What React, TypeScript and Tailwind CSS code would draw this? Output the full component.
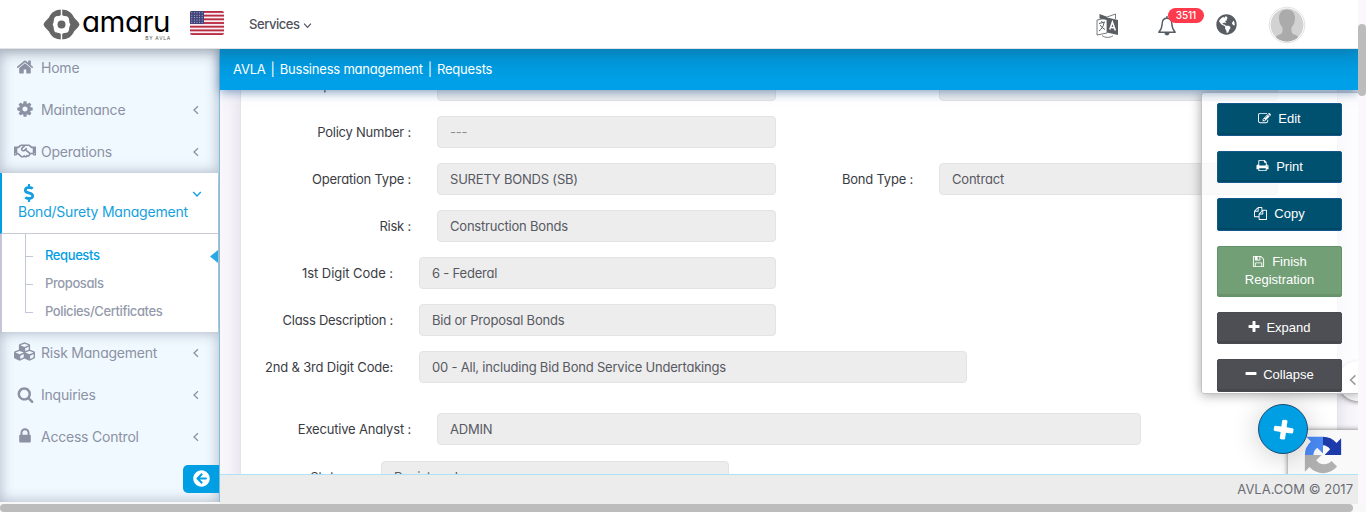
import React from 'react';
import { FaCubes, FaRegHandshake, FaDollarSign, FaArrowCircleLeft, FaGlobeAmericas } from 'react-icons/fa';

const ICONS = {
  home: 'M1472 992v480q0 26-19 45t-45 19h-384v-384h-256v384h-384q-26 0-45-19t-19-45v-480q0-1 .5-3t.5-3l575-474 575 474q1 2 1 6zm223-69l-62 74q-8 9-21 11h-3q-13 0-21-7l-692-577-692 577q-12 8-24 7-13-2-21-11l-62-74q-8-10-7-23.5t11-21.5l719-599q32-26 76-26t76 26l244 204v-195q0-14 9-23t23-9h192q14 0 23 9t9 23v408l219 182q10 8 11 21.5t-7 23.5z',
  cog: 'M1152 896q0-106-75-181t-181-75-181 75-75 181 75 181 181 75 181-75 75-181zm512-109v222q0 12-8 23t-20 13l-185 28q-19 54-39 91 35 50 107 138 10 12 10 25t-9 23q-27 37-99 108t-94 71q-12 0-26-9l-138-108q-44 23-91 38-16 136-29 186-7 28-36 28h-222q-14 0-24.5-8.500t-11.500-21.500l-28-184q-49-16-90-37l-141 107q-10 9-25 9-14 0-25-11-126-114-165-168-7-10-7-23 0-12 8-23 15-21 51-66.500t54-70.500q-27-50-41-99l-183-27q-13-2-21-12.500t-8-23.500v-222q0-12 8-23t19-13l186-28q14-46 39-92-40-57-107-138-10-12-10-24 0-10 9-23 26-36 98.500-107.500t94.500-71.500q13 0 26 10l138 107q44-23 91-38 16-136 29-186 7-28 36-28h222q14 0 24.500 8.500t11.500 21.500l28 184q49 16 90 37l142-107q9-9 24-9 13 0 25 10 129 119 165 170 7 8 7 22 0 12-8 23-15 21-51 66.500t-54 70.500q26 50 41 98l183 28q13 2 21 12.500t8 23.500z',
  search: 'M1216 832q0-185-131.500-316.500t-316.500-131.500-316.500 131.500-131.500 316.500 131.500 316.500 316.500 131.500 316.500-131.500 131.500-316.500zm512 832q0 52-38 90t-90 38q-54 0-90-38l-343-342q-179 124-399 124-143 0-273.500-55.500t-225-150-150-225-55.500-273.500 55.500-273.500 150-225 225-150 273.500-55.500 273.500 55.500 225 150 150 225 55.500 273.500q0 220-124 399l343 343q37 37 37 90z',
  lock: 'M640 768h512v-192q0-106-75-181t-181-75-181 75-75 181v192zm832 96v576q0 40-28 68t-68 28h-960q-40 0-68-28t-28-68v-576q0-40 28-68t68-28h32v-192q0-184 132-316t316-132 316 132 132 316v192h32q40 0 68 28t28 68z',
  edit: 'M888 1184l116-116-152-152-116 116v56h96v96h56zm440-720q-16-16-33 1l-350 350q-17 17-1 33t33-1l350-350q17-17 1-33zm80 594v190q0 119-84.500 203.500t-203.500 84.500h-832q-119 0-203.500-84.500t-84.500-203.500v-832q0-119 84.500-203.500t203.500-84.500h832q63 0 117 25 15 7 18 23 3 17-9 29l-49 49q-14 14-32 8-23-6-45-6h-832q-66 0-113 47t-47 113v832q0 66 47 113t113 47h832q66 0 113-47t47-113v-126q0-13 9-22l64-64q15-15 35-7t20 29zm-96-738l288 288-672 672h-288v-288zm444 132l-92 92-288-288 92-92q28-28 68-28t68 28l152 152q28 28 28 68t-28 68z',
  print: 'M448 1536h896v-256h-896v256zm0-640h896v-384h-160q-40 0-68-28t-28-68v-160h-640v640zm1152 64q0-26-19-45t-45-19-45 19-19 45 19 45 45 19 45-19 19-45zm128 0v416q0 13-9.500 22.500t-22.500 9.500h-224v160q0 40-28 68t-68 28h-960q-40 0-68-28t-28-68v-160h-224q-13 0-22.500-9.500t-9.500-22.500v-416q0-79 56.500-135.500t135.500-56.500h64v-544q0-40 28-68t68-28h672q40 0 88 20t76 48l152 152q28 28 48 76t20 88v256h64q79 0 135.500 56.500t56.500 135.500z',
  copy: 'M1696 384q40 0 68 28t28 68v1216q0 40-28 68t-68 28h-960q-40 0-68-28t-28-68v-288h-544q-40 0-68-28t-28-68v-672q0-40 20-88t48-76l408-408q28-28 76-48t88-20h416q40 0 68 28t28 68v328q68-40 128-40h416zm-544 213l-299 299h299v-299zm-640-384l-299 299h299v-299zm196 647l316-316v-416h-384v416q0 40-28 68t-68 28h-416v640h512v-256q0-40 20-88t48-76zm956 804v-1152h-384v416q0 40-28 68t-68 28h-416v640h896z',
  save: 'M512 1536h768v-384h-768v384zm896 0h128v-896q0-14-10-38.500t-20-34.500l-281-281q-10-10-34-20t-39-10v416q0 40-28 68t-68 28h-576q-40 0-68-28t-28-68v-416h-128v1280h128v-416q0-40 28-68t68-28h832q40 0 68 28t28 68v416zm-384-928v-320q0-13-9.500-22.500t-22.500-9.500h-192q-13 0-22.500 9.500t-9.500 22.500v320q0 13 9.500 22.500t22.500 9.500h192q13 0 22.500-9.500t9.500-22.500zm640 32v928q0 40-28 68t-68 28h-1344q-40 0-68-28t-28-68v-1344q0-40 28-68t68-28h928q40 0 88 20t76 48l280 280q28 28 48 76t20 88z',
  plus: 'M1600 736v192q0 40-28 68t-68 28h-416v416q0 40-28 68t-68 28h-192q-40 0-68-28t-28-68v-416h-416q-40 0-68-28t-28-68v-192q0-40 28-68t68-28h416v-416q0-40 28-68t68-28h192q40 0 68 28t28 68v416h416q40 0 68 28t28 68z',
  minus: 'M1600 736v192q0 40-28 68t-68 28h-1216q-40 0-68-28t-28-68v-192q0-40 28-68t68-28h1216q40 0 68 28t28 68z',
};

function Icon({ name, className }: { name: keyof typeof ICONS; className: string }) {
  return (
    <svg viewBox="0 0 1792 1792" fill="currentColor" className={className}>
      <path d={ICONS[name]} />
    </svg>
  );
}

function Chevron({ className }: { className: string }) {
  return (
    <svg viewBox="0 0 10 10" fill="none" stroke="currentColor" strokeWidth="1.3" className={className}>
      <path d="M7 1.200L3 5l4 3.800" />
    </svg>
  );
}

function Logo() {
  return (
    <div className="flex items-center">
      <svg width="37" height="31" viewBox="0 0 37 31" className="shrink-0">
        <path d="M18.500 0.500C24.500 0.500 29 3.500 31 8.500C33 10.500 36 13.500 36.500 15.500C36 17.500 33 20.500 31 22.500C29 27.500 24.500 30.500 18.500 30.500S8 27.500 6 22.500C4 20.500 1 17.500 0.500 15.500C1 13.500 4 10.500 6 8.500C8 3.500 12.500 0.500 18.500 0.500Z" fill="#666666" />
        <path d="M18.500 5.700C21 7.700 23.500 6.300 25.200 8.200C26.800 10 25.500 12.500 27.300 15.500C25.500 18.500 26.800 21 25.200 22.800C23.500 24.700 21 23.300 18.500 25.300C16 23.300 13.500 24.700 11.800 22.800C10.200 21 11.500 18.500 9.700 15.500C11.500 12.500 10.200 10 11.800 8.200C13.500 6.300 16 7.700 18.500 5.700Z" fill="#fff" />
        <path d="M18.500 0V7M18.500 24V31" stroke="#fff" strokeWidth="1.400" />
        <circle cx="18.500" cy="15.500" r="4" fill="#666666" />
      </svg>
      <div className="ml-[2px] flex w-[89px] flex-col">
        <span className="h-[26px] text-[29.500px] leading-[26px] font-normal tracking-[-0.500px] text-black">amaru</span>
        <span className="mt-[1px] self-end text-[5px] leading-[6px] tracking-[0.700px] whitespace-nowrap text-[#555]">BY AVLA</span>
      </div>
    </div>
  );
}

function Flag() {
  return (
    <svg width="34" height="24" viewBox="0 0 34 24" className="rounded-[2px]">
      <rect width="34" height="24" fill="#f6eef0" />
      {[0, 2, 4, 6, 8, 10, 12].map((i) => (
        <rect key={i} y={i * 1.846} width="34" height="1.846" fill="#b92a43" />
      ))}
      <rect width="14" height="13" fill="#41437a" />
      {[1.8, 4.2, 6.6, 9, 11.3].map((y) =>
        [1.8, 4.4, 7, 9.6, 12.2].map((x) => <circle key={`${x}-${y}`} cx={x} cy={y} r="0.550" fill="#c3c4dc" />),
      )}
    </svg>
  );
}

function Header() {
  return (
    <header className="relative z-20 flex h-[49px] shrink-0 items-center border-b border-[#e3e3e8] bg-white shadow-[0_1px_15px_1px_rgba(50,60,70,0.300)]">
      <div className="ml-[43px] w-[147px]">
        <Logo />
      </div>
      <div className="-mt-[3px]">
        <Flag />
      </div>
      <div className="mt-px ml-[25px] flex items-center text-[13px] font-medium tracking-[-0.450px] text-[#4f525c]">
        Services
        <Chevron className="mt-px ml-[3px] size-[9px] -rotate-90" />
      </div>
      <div className="mt-px mr-[52px] ml-auto flex items-center text-[#575d63]">
        <svg width="23" height="25" viewBox="0 0 23 25" className="mt-[2px]">
          <path d="M3.500 1L11 3.800V7L3.500 5.500z" fill="currentColor" />
          <path d="M11 4L19.500 1v5" fill="none" stroke="currentColor" strokeWidth="0.800" />
          <path d="M1 7l10-2v15L1 22z" fill="none" stroke="currentColor" strokeWidth="0.800" />
          <path d="M11 4.500L22 7v15l-11-2.500z" fill="currentColor" />
          <path d="M3 10.500l6-1.500M5.500 8l.8 1.500M8 9.500c-.5 4-2.500 6.500-5 8.500M4 12c1.500 2 3 3.500 5 4.500" fill="none" stroke="currentColor" strokeWidth="1" />
          <path d="M13.800 16.500l2.600-7.500 3 8.600M14.700 14.200l3.700.8" fill="none" stroke="#fff" strokeWidth="1.500" />
          <path d="M6 22.500c3 2.500 8 2.500 11 .2" fill="none" stroke="currentColor" strokeWidth="0.800" />
        </svg>
        <div className="relative ml-[38px]">
          <svg width="20" height="22" viewBox="0 0 20 22" fill="none" stroke="currentColor" strokeWidth="1.400" className="mt-[3px]">
            <path d="M10 3.200C6.800 3.200 5.300 5.500 5.200 8.500C5.100 12.500 4.300 14.500 1.800 17.300H18.200C15.700 14.500 14.900 12.500 14.800 8.500C14.700 5.500 13.200 3.200 10 3.200Z" strokeLinejoin="round" />
            <path d="M10 1v2" />
            <path d="M7.800 18h4.400a2.200 2.200 0 0 1-4.400 0z" fill="currentColor" strokeWidth="0.500" />
          </svg>
          <span className="absolute -top-[4px] left-[11px] flex h-[15px] w-9 items-center justify-center rounded-full bg-[#fd3b4c] text-[10px] font-medium tracking-[-0.100px] text-white">3511</span>
        </div>
        <FaGlobeAmericas className="ml-[39px] size-[21px]" />
        <svg width="38" height="38" viewBox="0 0 38 38" className="ml-[31px]">
          <defs>
            <clipPath id="avatar">
              <circle cx="19" cy="19" r="16.500" />
            </clipPath>
          </defs>
          <circle cx="19" cy="19" r="17.800" fill="#fff" stroke="#dedede" strokeWidth="0.900" />
          <g clipPath="url(#avatar)">
            <rect width="38" height="38" fill="#d2d2d2" />
            <path d="M19 3.500c5 0 8 3.200 8 8.500 0 4-1.200 7-3.500 9.500-.3 3-.2 5 1.500 6.500 3.500 1.200 6.500 2.500 7.500 8H5.500c1-5.500 4-6.800 7.500-8 1.700-1.500 1.800-3.500 1.500-6.500C12.200 19 11 16 11 12c0-5.300 3-8.500 8-8.500z" fill="#ababab" />
          </g>
        </svg>
      </div>
    </header>
  );
}

function NavItem({ icon, label, arrow = true }: { icon: React.ReactNode; label: string; arrow?: boolean }) {
  return (
    <div className="flex h-[42px] items-center text-[14px] text-[#8c91a3]">
      <div className="ml-[10px] flex w-[30px] justify-center">{icon}</div>
      <span className="-mt-[2px] ml-px flex-1 tracking-[-0.220px]">{label}</span>
      {arrow && <Chevron className="mr-[18px] size-[10px]" />}
    </div>
  );
}

function SubItem({ label, active }: { label: string; active?: boolean }) {
  return (
    <div className="relative flex h-7 items-center pt-[2px] pl-[20px]">
      <span className="absolute top-[15px] left-0 h-px w-2 bg-[#c4c7d6]" />
      <span className={active ? 'text-[#009ee3]' : 'text-[#949aab]'}>{label}</span>
    </div>
  );
}

function Sidebar() {
  return (
    <aside className="flex h-[453px] w-[220px] shrink-0 flex-col overflow-hidden border-r border-[#7fbfdc] bg-[#f0f9ff] shadow-[inset_0_0_14px_rgba(60,70,100,0.380)]">
      <div className="-mt-[2px]">
        <NavItem icon={<Icon name="home" className="-mt-[3px] size-[18px]" />} label="Home" arrow={false} />
        <NavItem icon={<Icon name="cog" className="-mt-[3px] size-[18px]" />} label="Maintenance" />
        <NavItem icon={<FaRegHandshake className="-mt-[2px] size-[22px]" />} label="Operations" />
      </div>
      <div className="h-[159px] w-[218px] bg-white shadow-[0_0_12px_rgba(60,70,100,0.420)]">
        <div className="h-[61px] border-b border-l-2 border-b-[#c9cbd5] border-l-[#009ee3] pt-[10px] pl-4 text-[#149fe0]">
          <div className="flex h-[19px] items-center justify-between pr-[16px] pl-[2px]">
            <FaDollarSign className="size-[18px]" />
            <Chevron className="mt-[3px] size-[10px] -rotate-90" />
          </div>
          <div className="text-[14px] leading-[19px] tracking-[-0.220px]">Bond/Surety Management</div>
        </div>
        <div className="relative h-[98px] border-l-2 border-[#c4c5d6] pt-[7px] pl-[23px]">
          <span className="absolute top-0 left-[23px] h-[79px] w-px bg-[#c4c7d6]" />
          <div className="text-[13px] font-medium tracking-[-0.400px]">
            <SubItem label="Requests" active />
            <SubItem label="Proposals" />
            <SubItem label="Policies/Certificates" />
          </div>
          <span className="absolute top-[16px] right-0 h-[13px] w-[8px] bg-[#2aaae5] [clip-path:polygon(100%_0,0_50%,100%_100%)]" />
        </div>
      </div>
      <NavItem icon={<FaCubes className="-mt-[3px] -ml-[2px] size-[21px]" />} label="Risk Management" />
      <NavItem icon={<Icon name="search" className="-mt-[2px] size-[17px]" />} label="Inquiries" />
      <NavItem icon={<Icon name="lock" className="-mt-[2px] size-[18px]" />} label="Access Control" />
      <div className="mt-[7px] ml-auto flex h-7 w-9 items-center justify-center rounded-l-[5px] bg-[#009ee3] text-white">
        <FaArrowCircleLeft className="-mt-px size-[17px]" />
      </div>
    </aside>
  );
}

function Field({ value, className }: { value: string; className: string }) {
  return (
    <div className={`flex h-8 shrink-0 items-center rounded-[4px] border border-[#e2e3e7] bg-[#ededed] pt-[2px] pl-3 tracking-[-0.200px] text-[#575962] ${className}`}>
      {value}
    </div>
  );
}

function Label({ text, className }: { text: string; className: string }) {
  return <div className={`shrink-0 pt-[2px] text-right whitespace-nowrap ${className}`}>{text}</div>;
}

function Form() {
  return (
    <div className="ml-5 flex h-[460px] w-[1098px] flex-col border-x border-[#e4e3e9] bg-white text-[13px] tracking-[-0.220px] text-[#3b3c43] shadow-[0_0_18px_rgba(69,65,98,0.160)]">
      <div className="-mt-[21px] flex items-center">
        <Label text="Operation Date :" className="w-[170px]" />
        <Field value="" className="ml-[26px] w-[339px]" />
        <Field value="" className="ml-[163px] w-[339px]" />
      </div>
      <div className="mt-[15px] flex items-center">
        <Label text="Policy Number :" className="w-[170px]" />
        <Field value="---" className="ml-[26px] w-[339px] text-[#8d8f96]!" />
      </div>
      <div className="mt-[15px] flex items-center">
        <Label text="Operation Type :" className="w-[170px]" />
        <Field value="SURETY BONDS (SB)" className="ml-[26px] w-[339px]" />
        <Label text="Bond Type :" className="w-[137px]" />
        <Field value="Contract" className="ml-[26px] w-[339px]" />
      </div>
      <div className="mt-[15px] flex items-center">
        <Label text="Risk :" className="w-[170px]" />
        <Field value="Construction Bonds" className="ml-[26px] w-[339px]" />
      </div>
      <div className="mt-[15px] flex items-center">
        <Label text="1st Digit Code :" className="w-[152px] tracking-[-0.050px]" />
        <Field value="6 - Federal" className="ml-[26px] w-[357px]" />
      </div>
      <div className="mt-[15px] flex items-center">
        <Label text="Class Description :" className="w-[152px] tracking-[-0.280px]" />
        <Field value="Bid or Proposal Bonds" className="ml-[26px] w-[357px]" />
      </div>
      <div className="mt-[15px] flex items-center">
        <Label text="2nd & 3rd Digit Code:" className="w-[152px] tracking-[-0.180px]" />
        <Field value="00 - All, including Bid Bond Service Undertakings" className="ml-[26px] w-[548px]" />
      </div>
      <div className="mt-[30px] flex items-center">
        <Label text="Executive Analyst :" className="w-[170px] tracking-[-0.180px]" />
        <Field value="ADMIN" className="ml-[26px] w-[704px]" />
      </div>
      <div className="mt-[16px] flex items-center">
        <Label text="Status :" className="w-[114px]" />
        <Field value="Registered" className="ml-[26px] w-[348px]" />
      </div>
    </div>
  );
}

const BLUE = 'h-[32.5px] border-[#14588c] bg-[#00506f]';
const DARK = 'h-[32.5px] border-[#484a50] bg-[#4d4f54]';

function ActionButton({ icon, label, className, narrow }: { icon: keyof typeof ICONS; label: string; className: string; narrow?: boolean }) {
  return (
    <button className={`block w-[125px] shrink-0 rounded-[2px] border px-3 text-center font-['Liberation_Sans',sans-serif] text-[13px] leading-[18px] text-white shadow-[inset_0_-2px_0_rgba(0,0,0,0.080)] ${className}`}>
      <Icon name={icon} className={narrow ? '-ml-px mr-[5px] inline-block size-[14px] align-[-2px]' : 'mr-[7px] inline-block size-[13px] align-[-1.5px]'} />
      {label}
    </button>
  );
}

function ActionPanel() {
  return (
    <div className="absolute top-[2px] left-[981px] flex h-[302px] w-[160px] flex-col gap-[15px] rounded-[3px] border border-[#c3c4c8] bg-white/70 pt-[10px] pl-[15px] shadow-[0_1px_12px_rgba(0,0,0,0.350)]">
      <ActionButton icon="edit" label="Edit" className={BLUE} />
      <ActionButton icon="print" label="Print" className={BLUE} />
      <ActionButton icon="copy" label="Copy" className={BLUE} />
      <ActionButton icon="save" label="Finish Registration" className="h-[51px] border-[#62936a] bg-[#739f77]" />
      <ActionButton icon="plus" label="Expand" className={DARK} narrow />
      <ActionButton icon="minus" label="Collapse" className={DARK} narrow />
    </div>
  );
}

function CaptchaBadge() {
  return (
    <div className="absolute top-[340px] left-[1068px] h-[60px] w-[90px] bg-[#f9f9f9] pt-[5px] pl-[15px] shadow-[0_0_5px_rgba(80,80,80,0.800)]">
      <svg width="40" height="40" viewBox="0 0 64 64">
        <path d="M61 31.900V5.200l-7.400 7.400A29 29 0 0 0 32 2.900v13.500a15.700 15.700 0 0 1 11.400 6.200L34.500 31.900z" fill="#1c3aa9" />
        <path d="M32 2.900H5.300l7.400 7.400A29 29 0 0 0 3 31.900h13.600a15.700 15.700 0 0 1 6.200-11.400l9.200 8.900z" fill="#4a8af4" />
        <path d="M3 31.900v26.700l7.400-7.400A29 29 0 0 0 54.500 50.500L45.600 41.600a15.700 15.700 0 0 1-24.500-1.100l8.700-8.600z" fill="#b0b0b0" />
      </svg>
    </div>
  );
}

export default function App() {
  return (
    <div className="flex h-[512px] w-[1366px] flex-col overflow-hidden bg-[#f8f8f8] font-['Inter','Liberation_Sans',sans-serif] [font-feature-settings:'cv11']">
      <div className="flex h-[504px] shrink-0">
        <div className="flex w-[1358px] flex-col overflow-hidden">
          <Header />
          <div className="flex flex-1">
            <Sidebar />
            <div className="flex w-[1138px] flex-col">
              <nav className="relative z-10 flex h-[41px] shrink-0 items-center gap-[5px] bg-linear-to-b from-[#0092d3] to-[#00a0e8] to-80% pl-[13px] text-[13px] tracking-[-0.200px] text-white shadow-[0_2px_10px_rgba(40,90,150,0.600)]">
                <span>AVLA</span>
                <span>|</span>
                <span>Bussiness management</span>
                <span>|</span>
                <span>Requests</span>
              </nav>
              <main className="relative h-[384px] shrink-0 overflow-hidden bg-[#f9f7fc]">
                <Form />
                <div className="absolute top-[271px] left-[1118px] size-10 rounded-full bg-white shadow-[0_1px_4px_rgba(0,0,0,0.450)]" />
                <ActionPanel />
                <Chevron className="absolute top-[284px] left-[1127px] size-[12px] text-[#9a9a9a]" />
                <CaptchaBadge />
                <div className="absolute top-[314px] left-[1038px] flex size-[50px] items-center justify-center rounded-full border border-[#1d4a78] bg-[#009fe3] text-white shadow-[0_3px_28px_rgba(0,0,0,0.200)]">
                  <Icon name="plus" className="mt-[2px] size-[25px] rotate-[8deg]" />
                </div>
              </main>
              <footer className="relative flex flex-1 items-center justify-end border-t border-[#aee2f8] bg-[#ececec] pr-[5px] text-[13px] text-[#6b6c73]">
                AVLA.COM © 2017
              </footer>
            </div>
          </div>
        </div>
        <div className="w-2 shrink-0 bg-[#faf8fd] pt-6">
          <div className="h-[72px] rounded-full bg-[#bcbcbc]" />
        </div>
      </div>
      <div className="h-2 w-[1353px] rounded-full bg-[#bcbcbc]" />
    </div>
  );
}
